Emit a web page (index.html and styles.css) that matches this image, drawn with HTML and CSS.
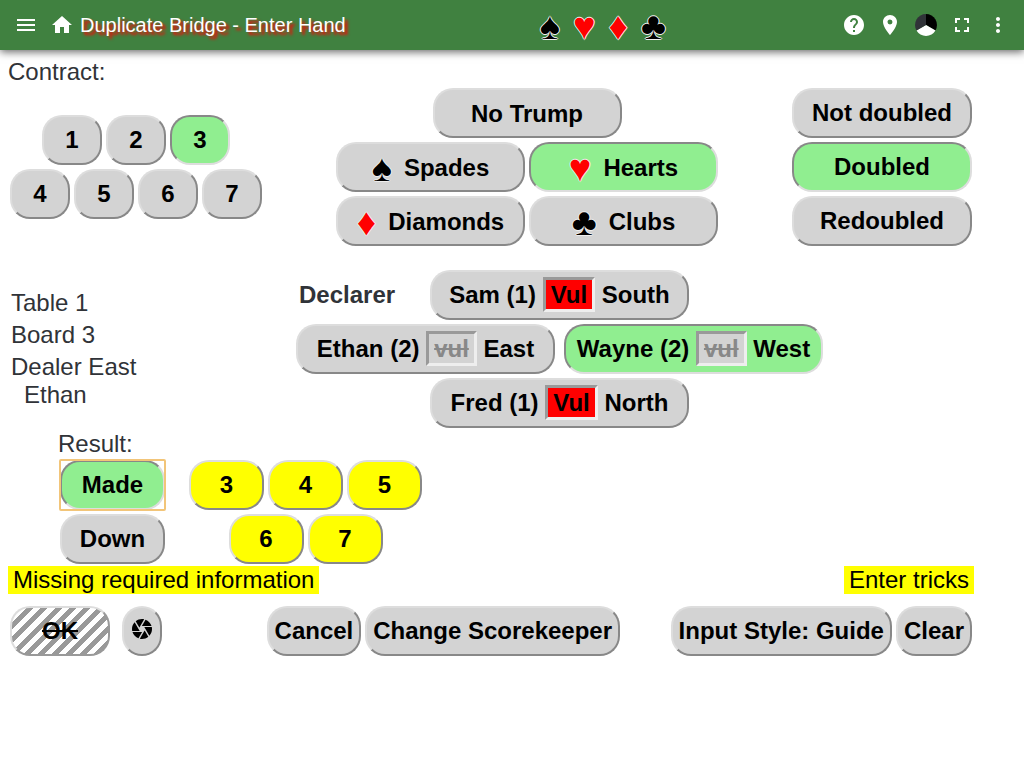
FILE: index.html
```
<!DOCTYPE html>
<html lang="en">
<head>
<meta charset="utf-8">
<title>Duplicate Bridge - Enter Hand</title>
<meta name="viewport" content="width=device-width, initial-scale=1">
<link rel="stylesheet" href="styles.css">
</head>
<body>
<header class="toolbar">
  <div class="toolbar-start">
    <button class="icon-button" type="button" aria-label="Menu"><svg viewBox="0 0 24 24"><path d="M3 18h18v-2H3v2zm0-5h18v-2H3v2zm0-7v2h18V6H3z"/></svg></button>
    <button class="icon-button" type="button" aria-label="Home"><svg viewBox="0 0 24 24"><path d="M10 20v-6h4v6h5v-8h3L12 3 2 12h3v8z"/></svg></button>
    <h1 class="title">Duplicate Bridge - Enter Hand</h1>
  </div>
  <div class="toolbar-suits"><span class="suit">♠</span><span class="suit red">♥</span><span class="suit red">♦</span><span class="suit">♣</span></div>
  <div class="toolbar-end">
    <button class="icon-button" type="button" aria-label="Help"><svg viewBox="0 0 24 24"><path d="M12 2C6.480 2 2 6.480 2 12s4.480 10 10 10 10-4.480 10-10S17.520 2 12 2zm1 17h-2v-2h2v2zm2.070-7.750l-.9.920C13.450 12.900 13 13.500 13 15h-2v-.5c0-1.100.450-2.100 1.170-2.830l1.240-1.260c.370-.360.590-.860.590-1.410 0-1.100-.9-2-2-2s-2 .9-2 2H8c0-2.210 1.790-4 4-4s4 1.790 4 4c0 .880-.360 1.680-.930 2.250z"/></svg></button>
    <button class="icon-button" type="button" aria-label="Location"><svg viewBox="0 0 24 24"><path d="M12 2C8.130 2 5 5.130 5 9c0 5.250 7 13 7 13s7-7.750 7-13c0-3.870-3.130-7-7-7zm0 9.500a2.500 2.500 0 0 1 0-5 2.500 2.500 0 0 1 0 5z"/></svg></button>
    <button class="icon-button" type="button" aria-label="Theme"><svg viewBox="0 0 24 24"><path fill="#000" d="M12 12V1a11 11 0 0 1 9.500 16.500z"/><path d="M12 12l9.500 5.500a11 11 0 0 1-19 0z"/><path fill="#303338" d="M12 12L2.500 17.500A11 11 0 0 1 12 1z"/></svg></button>
    <button class="icon-button" type="button" aria-label="Full screen"><svg viewBox="0 0 24 24"><path d="M7 14H5v5h5v-2H7v-3zm-2-4h2V7h3V5H5v5zm12 7h-3v2h5v-5h-2v3zM14 5v2h3v3h2V5h-5z"/></svg></button>
    <button class="icon-button" type="button" aria-label="More"><svg viewBox="0 0 24 24"><path d="M12 8c1.100 0 2-.9 2-2s-.9-2-2-2-2 .9-2 2 .9 2 2 2zm0 2c-1.100 0-2 .9-2 2s.9 2 2 2 2-.9 2-2-.9-2-2-2zm0 6c-1.100 0-2 .9-2 2s.9 2 2 2 2-.9 2-2-.9-2-2-2z"/></svg></button>
  </div>
</header>
<main class="content">
  <h2 class="label">Contract:</h2>
  <section class="contract">
    <div class="stack">
      <div class="row">
        <button class="key level" type="button">1</button>
        <button class="key level" type="button">2</button>
        <button class="key level selected" type="button" aria-pressed="true">3</button>
      </div>
      <div class="row">
        <button class="key level" type="button">4</button>
        <button class="key level" type="button">5</button>
        <button class="key level" type="button">6</button>
        <button class="key level" type="button">7</button>
      </div>
    </div>
    <div class="stack">
      <div class="row"><button class="key strain" type="button">No Trump</button></div>
      <div class="row">
        <button class="key strain" type="button"><span class="suit">♠</span>Spades</button>
        <button class="key strain selected" type="button" aria-pressed="true"><span class="suit red">♥</span>Hearts</button>
      </div>
      <div class="row">
        <button class="key strain" type="button"><span class="suit red">♦</span>Diamonds</button>
        <button class="key strain" type="button"><span class="suit">♣</span>Clubs</button>
      </div>
    </div>
    <div class="stack">
      <button class="key double" type="button">Not doubled</button>
      <button class="key double selected" type="button" aria-pressed="true">Doubled</button>
      <button class="key double" type="button">Redoubled</button>
    </div>
  </section>

  <section class="play">
    <div class="board">
      <p>Table 1</p>
      <p>Board 3</p>
      <p>Dealer East<br><span class="dealer">Ethan</span></p>
    </div>
    <div class="declarer">
      <h2 class="declarer-label">Declarer</h2>
      <button class="key player south" type="button">Sam (1) <span class="vul on">Vul</span> South</button>
      <div class="row sides">
        <button class="key player" type="button">Ethan (2) <span class="vul">vul</span> East</button>
        <button class="key player selected" type="button" aria-pressed="true">Wayne (2) <span class="vul">vul</span> West</button>
      </div>
      <button class="key player north" type="button">Fred (1) <span class="vul on">Vul</span> North</button>
    </div>
  </section>

  <section class="result">
    <h2 class="label result-label">Result:</h2>
    <div class="result-keys">
      <div class="stack">
        <div class="focus"><button class="key outcome selected" type="button" aria-pressed="true">Made</button></div>
        <button class="key outcome" type="button">Down</button>
      </div>
      <div class="stack">
        <div class="row">
          <button class="key trick" type="button">3</button>
          <button class="key trick" type="button">4</button>
          <button class="key trick" type="button">5</button>
        </div>
        <div class="row">
          <button class="key trick" type="button">6</button>
          <button class="key trick" type="button">7</button>
        </div>
      </div>
    </div>
  </section>

  <div class="messages">
    <p class="message">Missing required information</p>
    <p class="message">Enter tricks</p>
  </div>

  <footer class="actions">
    <div class="row submit">
      <button class="key ok" type="button" disabled>OK</button>
      <button class="key camera" type="button" aria-label="Take picture"><svg viewBox="0 0 24 24"><path d="M9.400 10.500l4.770-8.260C13.470 2.090 12.750 2 12 2c-2.400 0-4.600.850-6.320 2.250l3.660 6.350.060-.1zM21.540 9c-.920-2.920-3.150-5.260-6-6.340L11.880 9h9.660zm.260 1h-7.490l.290.500 4.760 8.250C21 16.970 22 14.610 22 12c0-.690-.070-1.350-.2-2zM8.540 12l-3.900-6.750C3.010 7.030 2 9.390 2 12c0 .690.070 1.350.2 2h7.490l-1.150-2zm-6.080 3c.920 2.920 3.150 5.260 6 6.340L12.120 15H2.460zm11.270 0l-3.900 6.760c.7.150 1.420.240 2.170.240 2.400 0 4.600-.850 6.320-2.250l-3.660-6.350-.930 1.600z"/></svg></button>
    </div>
    <div class="row middle">
      <button class="key" type="button">Cancel</button>
      <button class="key" type="button">Change Scorekeeper</button>
    </div>
    <div class="row">
      <button class="key" type="button">Input Style: Guide</button>
      <button class="key" type="button">Clear</button>
    </div>
  </footer>
</main>
</body>
</html>
```
FILE: styles.css
```
* {
  box-sizing: border-box;
}

body {
  margin: 0;
  background: #fff;
  color: #303338;
  font: 24px/28px "Liberation Sans", Arial, sans-serif;
}

h1, h2, p {
  margin: 0;
  font-size: inherit;
  font-weight: normal;
}

.toolbar {
  display: flex;
  align-items: center;
  justify-content: space-between;
  height: 50px;
  padding: 0 14px;
  background: #408140;
  color: #fff;
  box-shadow: 0 2px 8px rgba(0, 0, 0, 0.6);
}

.toolbar-start,
.toolbar-end {
  display: flex;
  align-items: center;
  gap: 12px;
}

.icon-button {
  width: 24px;
  height: 24px;
  padding: 0;
  border: 0;
  background: none;
  color: inherit;
}

.icon-button svg {
  display: block;
  width: 24px;
  height: 24px;
  fill: currentColor;
}

.title {
  margin-left: -6px;
  font-size: 20px;
  text-shadow: 3px 3px 3px #f00;
}

.toolbar-suits {
  display: flex;
  gap: 13px;
  padding: 1px 0 0 18px;
}

.suit {
  color: #000;
  font-size: 38px;
  font-weight: normal;
  line-height: 28px;
  text-shadow: 1px 0 #eee, -1px 0 #eee, 0 1px #eee, 0 -1px #eee;
}

.suit.red {
  color: #f00;
}

.content {
  padding: 8px 52px 8px 10px;
}

.label {
  margin-left: -2px;
}

.contract {
  display: flex;
  align-items: center;
  justify-content: space-between;
  padding-top: 2px;
}

.stack {
  display: flex;
  flex-direction: column;
  align-items: center;
  gap: 4px;
}

.row {
  display: flex;
  gap: 4px;
}

.key {
  height: 50px;
  padding: 0 6px;
  border: 2px solid;
  border-color: #ddd #888 #888 #ddd;
  border-radius: 20px;
  background: #d3d3d3;
  color: #000;
  font: bold 24px/28px "Liberation Sans", Arial, sans-serif;
  white-space: nowrap;
}

.key.selected {
  border-color: #888 #ddd #ddd #888;
  background: #90ee90;
}

.level {
  width: 60px;
}

.strain {
  display: flex;
  align-items: center;
  justify-content: center;
  gap: 12px;
  width: 189px;
  padding-top: 1px;
}

.double {
  width: 180px;
}

.play {
  display: flex;
  align-items: flex-start;
  padding-top: 24px;
}

.board {
  display: flex;
  flex: 0 0 286px;
  flex-direction: column;
  gap: 4px;
  padding: 19px 0 0 1px;
}

.dealer {
  padding-left: 13px;
}

.declarer {
  display: grid;
  grid-template-columns: 134px 259px 134px;
  row-gap: 4px;
  align-items: center;
}

.declarer-label {
  padding-left: 3px;
  font-weight: bold;
}

.player {
  width: 259px;
  padding: 0;
}

.sides {
  grid-column: 1 / -1;
  gap: 9px;
}

.north {
  grid-column: 2;
}

.vul {
  display: inline-block;
  margin-bottom: 1px;
  padding: 1px 5px 0;
  border: 3px solid;
  border-color: #999 #eee #eee #999;
  background: #d3d3d3;
  color: #888;
  text-decoration: line-through;
}

.vul.on {
  background: #f00;
  color: #000;
  text-decoration: none;
}

.result {
  padding: 2px 0 0 50px;
}

.result-keys {
  display: flex;
  gap: 24px;
  padding-top: 2px;
}

.focus {
  position: relative;
}

.focus::after {
  position: absolute;
  inset: -1px;
  border: 2px solid #f2c579;
  border-radius: 2px;
  content: "";
  pointer-events: none;
}

.outcome {
  width: 105px;
}

.trick {
  width: 75px;
  background: #ff0;
}

.messages {
  display: flex;
  justify-content: space-between;
  margin: 2px -2px 0;
}

.message {
  padding: 0 5px;
  background: #ff0;
  color: #000;
}

.actions {
  display: flex;
  justify-content: space-between;
  padding-top: 12px;
}

.submit {
  gap: 12px;
}

.key.ok {
  width: 100px;
  border-color: #ddd #999 #999 #ddd;
  background: repeating-linear-gradient(-45deg, #fff, #fff 5px, #999 5px, #999 10px);
  text-decoration: line-through;
}

.camera {
  width: 40px;
}

.camera svg {
  display: block;
  width: 24px;
  height: 24px;
  margin-top: -4px;
}

.middle {
  margin-left: 54px;
}
```
